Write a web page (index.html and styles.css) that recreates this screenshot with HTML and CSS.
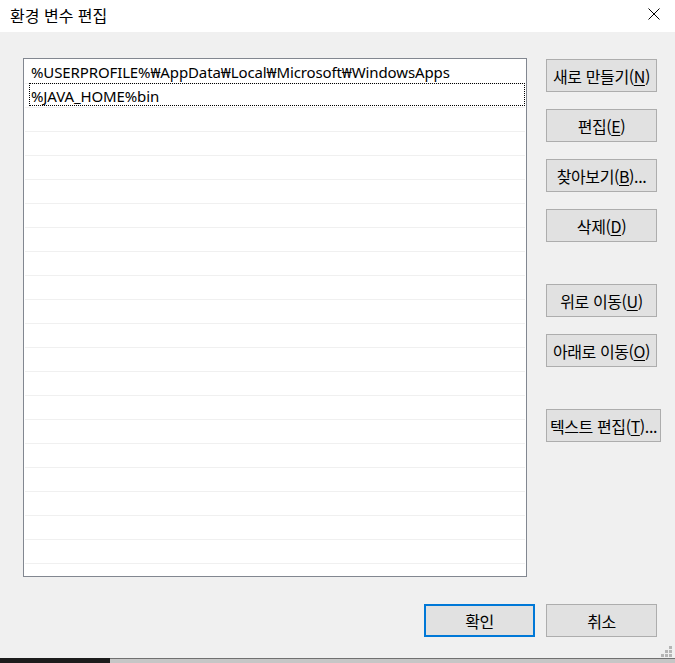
FILE: index.html
```html
<!DOCTYPE html>
<html lang="ko">
<head>
<meta charset="utf-8">
<title>환경 변수 편집</title>
<link rel="stylesheet" href="styles.css">
</head>
<body>
<div class="window">
  <div class="titlebar">
    <span class="title">환경 변수 편집</span>
    <svg class="close" width="12" height="12" viewBox="0 0 12 12"><path d="M0.5 0.5 L11.5 11.5 M11.5 0.5 L0.5 11.5" stroke="#000" stroke-width="1" fill="none"/></svg>
  </div>
  <div class="main">
    <div class="list">
      <div class="row">%USERPROFILE%₩AppData₩Local₩Microsoft₩WindowsApps</div>
      <div class="row focus">%JAVA_HOME%bin</div>
      <div class="row"></div><div class="row"></div><div class="row"></div><div class="row"></div>
      <div class="row"></div><div class="row"></div><div class="row"></div><div class="row"></div>
      <div class="row"></div><div class="row"></div><div class="row"></div><div class="row"></div>
      <div class="row"></div><div class="row"></div><div class="row"></div><div class="row"></div>
      <div class="row"></div><div class="row"></div><div class="row"></div>
    </div>
    <div class="side">
      <button class="btn">새로 만들기(<u>N</u>)</button>
      <button class="btn">편집(<u>E</u>)</button>
      <button class="btn">찾아보기(<u>B</u>)...</button>
      <button class="btn">삭제(<u>D</u>)</button>
      <button class="btn sep">위로 이동(<u>U</u>)</button>
      <button class="btn">아래로 이동(<u>O</u>)</button>
      <button class="btn sep wide">텍스트 편집(<u>T</u>)...</button>
    </div>
  </div>
  <div class="footer">
    <button class="btn default">확인</button>
    <button class="btn">취소</button>
  </div>
  <div class="grip">
    <i class="d1"></i><i class="d2"></i><i class="d3"></i><i class="d4"></i><i class="d5"></i><i class="d6"></i>
  </div>
  <div class="taskbar"><div class="tb-dark"></div><div class="tb-light"></div></div>
</div>
</body>
</html>
```

FILE: styles.css
```css
* { box-sizing: border-box; }
html, body { margin: 0; padding: 0; }
body {
  width: 675px;
  height: 663px;
  overflow: hidden;
  background: #f0f0f0;
  font-family: "Noto Sans", "Noto Sans CJK KR", sans-serif;
  font-size: 15px;
  color: #000;
}
.window {
  position: relative;
  width: 675px;
  height: 663px;
  display: flex;
  flex-direction: column;
}
.titlebar {
  height: 32px;
  background: #fff;
  display: flex;
  align-items: center;
  justify-content: space-between;
  padding: 0 15px 0 10px;
}
.title {
  font-family: "Noto Sans CJK KR", sans-serif;
  font-size: 16px;
  letter-spacing: 0;
  line-height: 20px;
  margin-top: -3px;
}
.close { display: block; margin-top: -5px; }
.main {
  display: flex;
  padding: 26px 0 0 23px;
}
.list {
  width: 504px;
  height: 519px;
  border: 1px solid #828790;
  background: #fff;
  padding: 1px 1px 0;
  overflow: hidden;
}
.row {
  position: relative;
  height: 24px;
  border-bottom: 1px solid #f0f0f0;
  padding-left: 6px;
  line-height: 24px;
  white-space: nowrap;
  font-size: 15px;
  letter-spacing: -0.12px;
}
.row.focus::before {
  content: "";
  position: absolute;
  left: 4px;
  right: 0;
  top: -1px;
  bottom: 1px;
  border: 1px dotted #000;
}
.side {
  display: flex;
  flex-direction: column;
  align-items: flex-start;
  gap: 17px;
  margin-left: 19px;
  padding-top: 1px;
}
.btn {
  width: 111px;
  height: 33px;
  background: #e1e1e1;
  border: 1px solid #adadad;
  font-family: "Noto Sans CJK KR", sans-serif;
  font-size: 16px;
  letter-spacing: -0.4px;
  color: #000;
  padding: 0;
  line-height: 20px;
  white-space: nowrap;
}
.btn u { text-underline-offset: 2px; }
.btn.sep { margin-top: 25px; }
.btn.wide { width: 115px; }
.btn.default {
  border: 2px solid #0078d7;
}
.footer {
  display: flex;
  justify-content: flex-end;
  gap: 11px;
  padding: 27px 18px 0 0;
}
.grip {
  position: absolute;
  right: 3px;
  bottom: 6px;
  width: 11px;
  height: 11px;
}
.grip i {
  position: absolute;
  width: 3px;
  height: 3px;
  background: #b5b5b5;
}
.grip .d1 { left: 8px; top: 0; }
.grip .d2 { left: 4px; top: 4px; }
.grip .d3 { left: 8px; top: 4px; }
.grip .d4 { left: 0; top: 8px; }
.grip .d5 { left: 4px; top: 8px; }
.grip .d6 { left: 8px; top: 8px; }
.taskbar {
  position: absolute;
  left: 0;
  right: 0;
  bottom: 0;
  height: 5px;
  display: flex;
}
.tb-dark { width: 110px; background: #1c1c1c; }
.tb-light { flex: 1; background: #c6c6c6; border-top: 1px solid #707070; }
```
